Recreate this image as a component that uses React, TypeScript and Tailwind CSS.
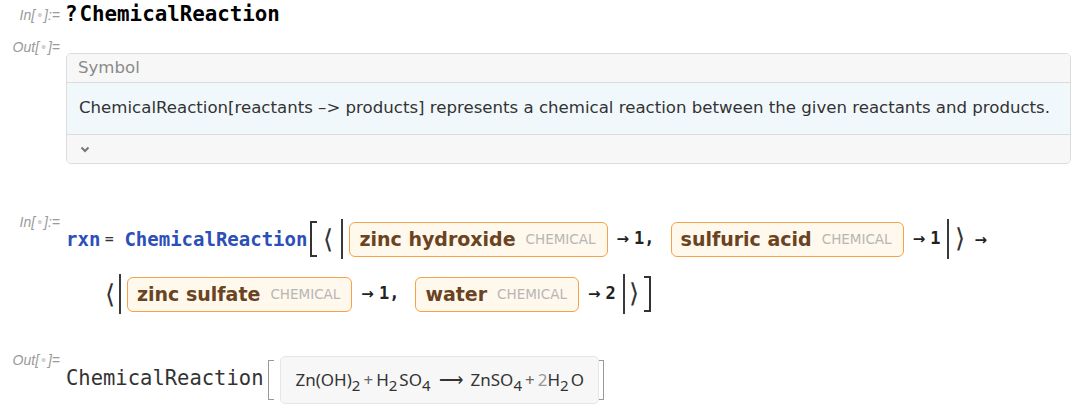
import React from "react";

const Label = ({ kind, className = "" }: { kind: "In" | "Out"; className?: string }) => (
  <div
    className={`w-[66px] shrink-0 pr-[6px] text-right text-[14px] leading-[16px] italic text-[#9a9a9a] [font-family:'Liberation_Sans',sans-serif] ${className}`}
  >
    {kind}[<span className="mx-[2px] text-[#d0d0d0]">•</span>]{kind === "In" ? ":=" : "="}
  </div>
);

const Chip = ({ name }: { name: string }) => (
  <span className="inline-flex h-[35px] items-center rounded-[6px] border-[1.5px] border-[#f5a24a] bg-[#fff8ec] pl-[9px] pr-[11px] [font-family:'DejaVu_Sans',sans-serif]">
    <span className="text-[19px] font-bold text-[#6a4322]">{name}</span>
    <span className="ml-[10px] text-[13.5px] text-[#b6b6b6]">CHEMICAL</span>
  </span>
);

const SmallArrow = () => (
  <span className="text-[15px] font-bold text-[#222] [font-family:'DejaVu_Sans',sans-serif]">→</span>
);

const Rule = ({ n, comma }: { n: number; comma?: boolean }) => (
  <span className={`ml-[9px] inline-flex items-center ${comma ? "mr-[16px]" : "mr-[7px]"}`}>
    <SmallArrow />
    <span className="ml-[5px] text-[17px] font-bold text-[#222] [font-family:'DejaVu_Sans_Mono',monospace]">
      {n}
      {comma && ","}
    </span>
  </span>
);

const Bar = () => <span className="inline-block h-[40px] w-[2px] bg-[#3a3a3a]" />;
const Angle = ({ close }: { close?: boolean }) => (
  <span className="inline-block text-[26px] font-light leading-none text-[#333] [font-family:'DejaVu_Sans',sans-serif]">
    {close ? "⟩" : "⟨"}
  </span>
);

const Sub = ({ children }: { children: React.ReactNode }) => (
  <span className="relative top-[5px] text-[15px]">{children}</span>
);

export default function App() {
  return (
    <div className="h-[415px] w-[1080px] bg-white">
      {/* In: ?ChemicalReaction */}
      <div className="flex pt-[7px]">
        <Label kind="In" />
        <div className="-mt-[5px] flex text-[20.8px] leading-[24px] font-bold text-black [font-family:'DejaVu_Sans_Mono',monospace]">
          <span className="-ml-[1px] mr-[2px]">?</span>
          <span>ChemicalReaction</span>
        </div>
      </div>

      {/* Out: info box */}
      <div className="mt-[13px] flex">
        <Label kind="Out" />
        <div className="mt-[14px] w-[1005px] overflow-hidden rounded-[5px] border border-[#dcdcdc] [font-family:'DejaVu_Sans',sans-serif]">
          <div className="flex h-[28px] items-center bg-[#f7f7f7] px-[11px] text-[16.6px] text-[#8a8a8a]">
            Symbol
          </div>
          <div className="flex h-[53px] items-center border-y border-[#dcdcdc] bg-[#f1f8fc] px-[12px] text-[16.6px] text-[#333]">
            ChemicalReaction[reactants –&gt; products] represents a chemical reaction between the given reactants and products.
          </div>
          <div className="flex h-[28px] items-center bg-[#f7f7f7] px-[13px]">
            <svg width="10" height="7" viewBox="0 0 10 7">
              <path d="M1.5 1.5 L5 5 L8.5 1.5" fill="none" stroke="#777" strokeWidth="2" />
            </svg>
          </div>
        </div>
      </div>

      {/* In: rxn = ... */}
      <div className="mt-[50px] flex">
        <Label kind="In" />
        <div className="mt-[5px]">
          <div className="flex h-[40px] items-center">
            <span className="text-[19px] font-bold text-[#2c4fb8] [font-family:'DejaVu_Sans_Mono',monospace]">
              rxn
            </span>
            <span className="ml-[4px] mr-[10px] text-[12px] font-bold text-[#333] [font-family:'DejaVu_Sans',sans-serif]">
              =
            </span>
            <span className="text-[19px] font-bold text-[#2c4fb8] [font-family:'DejaVu_Sans_Mono',monospace]">
              ChemicalReaction
            </span>
            <span className="ml-[3px] mr-[6px] h-[36px] w-[7px] border-y-2 border-l-2 border-[#333]" />
            <Angle />
            <span className="ml-[8px] mr-[6px] flex">
              <Bar />
            </span>
            <Chip name="zinc hydroxide" />
            <Rule n={1} comma />
            <Chip name="sulfuric acid" />
            <Rule n={1} />
            <Bar />
            <span className="ml-[6px]">
              <Angle close />
            </span>
            <span className="ml-[9px]">
              <SmallArrow />
            </span>
          </div>
          <div className="mt-[15px] flex h-[40px] items-center pl-[39px]">
            <Angle />
            <span className="ml-[4px] mr-[6px] flex">
              <Bar />
            </span>
            <Chip name="zinc sulfate" />
            <Rule n={1} comma />
            <Chip name="water" />
            <Rule n={2} />
            <Bar />
            <span className="ml-[4px]">
              <Angle close />
            </span>
            <span className="ml-[5px] h-[36px] w-[7px] border-y-2 border-r-2 border-[#333]" />
          </div>
        </div>
      </div>

      {/* Out: ChemicalReaction[...] */}
      <div className="mt-[38px] flex">
        <Label kind="Out" />
        <div className="mt-[4px] flex items-center">
          <span className="-mt-[3px] text-[20.5px] text-[#333] [font-family:'DejaVu_Sans_Mono',monospace]">
            ChemicalReaction
          </span>
          <span className="ml-[5px] mr-[6px] h-[40px] w-[6px] border-y border-l border-[#999]" />
          <div className="flex h-[48px] items-center rounded-[5px] border border-[#e6e6e6] bg-[#f7f7f7] px-[14px] text-[17px] text-[#333] [font-family:'Noto_Sans',sans-serif]">
            <span>Zn(OH)</span>
            <Sub>2</Sub>
            <span className="mx-[3px] text-[#666]">+</span>
            <span>H</span>
            <Sub>2</Sub>
            <span className="ml-[2px]">SO</span>
            <Sub>4</Sub>
            <span className="mx-[8px]">⟶</span>
            <span>ZnSO</span>
            <Sub>4</Sub>
            <span className="mx-[3px] text-[#666]">+</span>
            <span className="text-[#999]">2</span>
            <span>H</span>
            <Sub>2</Sub>
            <span className="ml-[2px]">O</span>
          </div>
          <span className="ml-[0px] h-[40px] w-[5px] border-y border-r border-[#999]" />
        </div>
      </div>
    </div>
  );
}
